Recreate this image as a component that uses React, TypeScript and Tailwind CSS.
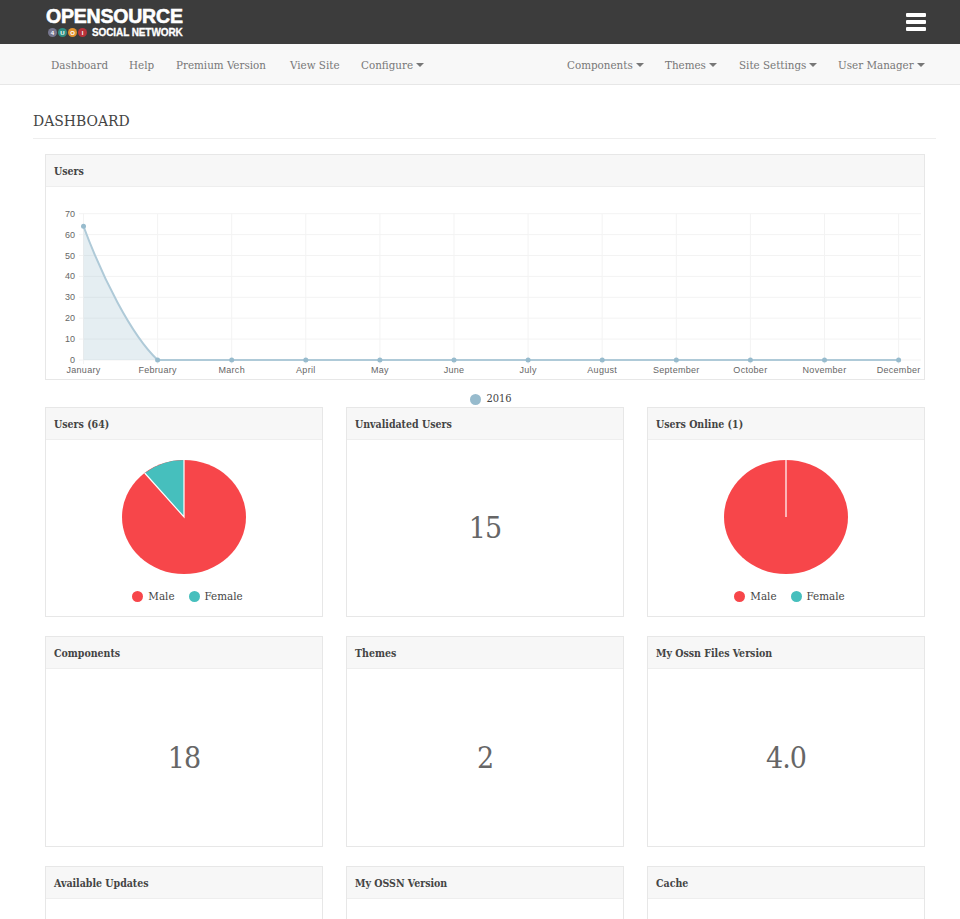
import React from "react";

const SLAB = "font-['DejaVu_Serif_Condensed','DejaVu_Serif',serif]";

const MONTHS = ["January", "February", "March", "April", "May", "June", "July", "August", "September", "October", "November", "December"];

const LEFT_NAV = [
  { label: "Dashboard", width: "w-[78px]" },
  { label: "Help", width: "w-[47px]" },
  { label: "Premium Version", width: "w-[114px]" },
  { label: "View Site", width: "w-[71px]" },
  { label: "Configure", caret: true },
];

const RIGHT_NAV = [
  { label: "Components", caret: true, width: "w-[98px]" },
  { label: "Themes", caret: true, width: "w-[74px]" },
  { label: "Site Settings", caret: true, width: "w-[99px]" },
  { label: "User Manager", caret: true, width: "w-[82px]" },
];

const NavItem = ({ label, caret, width }: { label: string; caret?: boolean; width?: string }) => (
  <a className={`flex items-center gap-[3px] whitespace-nowrap text-[#777777] ${width ?? ""}`}>
    {label}
    {caret && <span className="mt-[-1px] h-0 w-0 border-x-[4px] border-t-[4px] border-x-transparent border-t-[#777777]" />}
  </a>
);

const Logo = () => (
  <div className="flex w-[140px] flex-col whitespace-nowrap pt-[1px] font-['Liberation_Sans',Arial,sans-serif] font-bold text-white">
    <div className="h-[19px] text-[19.5px] leading-[19px] tracking-[-0.2px] [-webkit-text-stroke:0.6px_white]">OPENSOURCE</div>
    <div className="mt-[1px] flex h-[11px] items-center pl-[2px]">
      <div className="flex gap-[1px] text-[6px] leading-none">
        <span className="flex h-[9px] w-[9px] items-center justify-center rounded-full bg-[#77778f]">4</span>
        <span className="flex h-[9px] w-[9px] items-center justify-center rounded-full bg-[#2f8f83]">U</span>
        <span className="flex h-[9px] w-[9px] items-center justify-center rounded-full bg-[#e2922f]">O</span>
        <span className="flex h-[9px] w-[9px] items-center justify-center rounded-full bg-[#b8323a]">I</span>
      </div>
      <span className="ml-[5px] text-[10px] leading-none tracking-[-0.1px] [-webkit-text-stroke:0.3px_white]">SOCIAL NETWORK</span>
    </div>
  </div>
);

const Panel = ({ title, height, children }: { title: string; height: string; children?: React.ReactNode }) => (
  <div className={`flex flex-col border border-[#e7e7e7] bg-white ${height}`}>
    <div className={`flex h-[32px] shrink-0 items-center border-b border-[#eeeeee] bg-[#f7f7f7] px-[8px] pt-[2px] text-[10.5px] font-bold text-[#444444] ${SLAB}`}>
      {title}
    </div>
    {children}
  </div>
);

const BigNumber = ({ value }: { value: string }) => (
  <div className={`flex flex-1 items-center justify-center pb-[1px] text-[30px] tracking-[-1px] text-[#666666] ${SLAB}`}>{value}</div>
);

const Legend = () => (
  <div className={`flex items-center justify-center gap-[14px] pl-[7px] text-[11.5px] text-[#444444] ${SLAB}`}>
    <span className="flex items-center gap-[5px]">
      <span className="h-[11px] w-[11px] rounded-full bg-[#f7464a]" />
      Male
    </span>
    <span className="flex items-center gap-[5px]">
      <span className="h-[11px] w-[11px] rounded-full bg-[#46bfbd]" />
      Female
    </span>
  </div>
);

const Pie = ({ slice }: { slice: boolean }) => (
  <div className="flex flex-1 flex-col items-center pt-[18px]">
    <svg width="128" height="118" viewBox="0 0 128 118">
      <ellipse cx="64" cy="59" rx="62" ry="57" fill="#f7464a" />
      {slice ? (
        <>
          <path d="M64 59 L24.7 15 A62 57 0 0 1 64 2 Z" fill="#46bfbd" />
          <path d="M24.7 15 L64 59 L64 2" fill="none" stroke="#ffffff" strokeWidth="1.2" />
        </>
      ) : (
        <path d="M64 59 L64 2" fill="none" stroke="#ffffff" strokeWidth="1.2" />
      )}
    </svg>
    <div className="mt-[12px]">
      <Legend />
    </div>
  </div>
);

const LineChart = () => {
  const xs = MONTHS.map((_, i) => 37.5 + i * 74.1);
  const ys = [0, 10, 20, 30, 40, 50, 60, 70];
  const yOf = (v: number) => 173 - v * 2.09;
  return (
    <svg width="878" height="192" viewBox="0 0 878 192" className="block">
      {ys.map((v) => (
        <g key={v}>
          <line x1="33" x2="875" y1={yOf(v)} y2={yOf(v)} stroke="#f3f3f3" />
          <text x="29" y={yOf(v) + 3} textAnchor="end" fontSize="9" fill="#666666" fontFamily="Liberation Sans">{v}</text>
        </g>
      ))}
      {xs.map((x) => (
        <line key={x} x1={x} x2={x} y1={yOf(70)} y2="177" stroke="#f3f3f3" />
      ))}
      <path d={`M37.5 ${yOf(64)} C56 ${yOf(40)} 85 ${yOf(12)} 111.6 173 L37.5 173 Z`} fill="#97bbcd" fillOpacity="0.25" />
      <path d={`M37.5 ${yOf(64)} C56 ${yOf(40)} 85 ${yOf(12)} 111.6 173 L852.6 173`} fill="none" stroke="#afcad8" strokeWidth="2" />
      <circle cx="37.5" cy={yOf(64)} r="2.5" fill="#97bbcd" />
      {xs.slice(1).map((x) => (
        <circle key={x} cx={x} cy="173" r="2.5" fill="#97bbcd" />
      ))}
      {MONTHS.map((m, i) => (
        <text key={m} x={xs[i]} y="186" textAnchor="middle" fontSize="9" fill="#666666" letterSpacing="0.3" fontFamily="Liberation Sans">{m}</text>
      ))}
    </svg>
  );
};

export default function App() {
  return (
    <div className="h-[919px] w-[960px] overflow-hidden bg-white">
      <header className="flex h-[44px] items-center justify-between bg-[#3c3c3c] pl-[46px] pr-[34px]">
        <Logo />
        <div className="flex w-[20px] flex-col gap-[3px]">
          <span className="h-[4px] rounded-[1px] bg-white" />
          <span className="h-[4px] rounded-[1px] bg-white" />
          <span className="h-[4px] rounded-[1px] bg-white" />
        </div>
      </header>

      <nav className={`flex h-[41px] items-center justify-between border-b border-[#e7e7e7] bg-[#f8f8f8] pl-[51px] pr-[40px] pt-[3px] text-[11.5px] ${SLAB}`}>
        <div className="flex">
          {LEFT_NAV.map((item) => (
            <NavItem key={item.label} {...item} />
          ))}
        </div>
        <div className="flex">
          {RIGHT_NAV.map((item) => (
            <NavItem key={item.label} {...item} />
          ))}
        </div>
      </nav>

      <main className="pl-[33px] pr-[24px]">
        <h1 className={`flex h-[54px] items-end border-b border-[#eeeeee] pb-[7px] text-[15.5px] leading-[20px] text-[#444444] ${SLAB}`}>
          DASHBOARD
        </h1>

        <div className="pl-[12px] pr-[11px] pt-[15px]">
          <Panel title="Users" height="h-[226px]">
            <LineChart />
          </Panel>

          <div className={`flex h-[27px] items-center justify-center gap-[5px] pl-[12px] pt-[11px] text-[11px] text-[#444444] ${SLAB}`}>
            <span className="h-[11px] w-[11px] rounded-full bg-[#97bbcd]" />
            2016
          </div>

          <div className="grid grid-cols-[278px_278px_278px] gap-x-[23px] gap-y-[19px]">
            <Panel title="Users (64)" height="h-[210px]"><Pie slice /></Panel>
            <Panel title="Unvalidated Users" height="h-[210px]"><BigNumber value="15" /></Panel>
            <Panel title="Users Online (1)" height="h-[210px]"><Pie slice={false} /></Panel>
            <Panel title="Components" height="h-[211px]"><BigNumber value="18" /></Panel>
            <Panel title="Themes" height="h-[211px]"><BigNumber value="2" /></Panel>
            <Panel title="My Ossn Files Version" height="h-[211px]"><BigNumber value="4.0" /></Panel>
            <Panel title="Available Updates" height="h-[211px]" />
            <Panel title="My OSSN Version" height="h-[211px]" />
            <Panel title="Cache" height="h-[211px]" />
          </div>
        </div>
      </main>
    </div>
  );
}
